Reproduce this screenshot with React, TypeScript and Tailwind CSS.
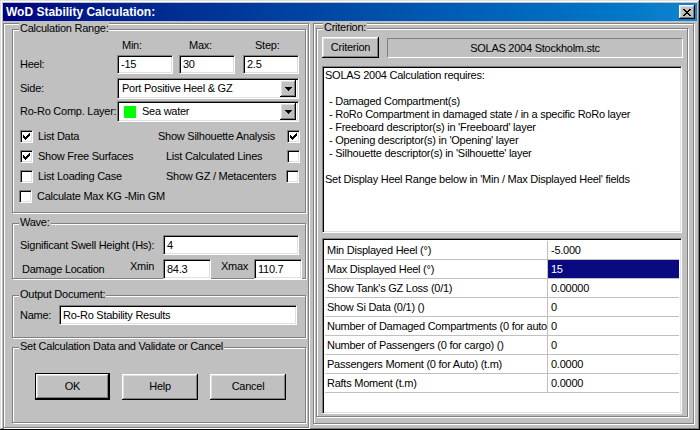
import React from 'react'

// classic win9x bevels
const raised =
  'bg-[#c0c0c0] shadow-[inset_-1px_-1px_#000,inset_1px_1px_#fff,inset_-2px_-2px_#808080,inset_2px_2px_#dfdfdf]'
const sunken =
  'bg-white border border-t-[#808080] border-l-[#808080] border-r-white border-b-white shadow-[inset_1px_1px_#000,inset_-1px_-1px_#dfdfdf]'
const etched = 'border border-[#808080] shadow-[inset_1px_1px_#fff,1px_1px_#fff]'

function Group({ title, className, children }: { title: string; className: string; children: React.ReactNode }) {
  return (
    <div className={`relative shrink-0 ${etched} ${className}`}>
      <span className="absolute left-[6px] top-[-8px] bg-[#c0c0c0] px-[1px] leading-[13px]">{title}</span>
      {children}
    </div>
  )
}

function Field({ value, className }: { value: string; className: string }) {
  return (
    <div className={`${sunken} flex items-center pl-[3px] leading-[13px] overflow-hidden ${className}`}>
      {value}
    </div>
  )
}

function Check({ on }: { on?: boolean }) {
  return (
    <span className={`${sunken} w-[13px] h-[13px] shrink-0 flex items-center justify-center`}>
      {on && (
        <svg width="7" height="7" viewBox="0 0 7 7" shapeRendering="crispEdges">
          <rect x="6" y="0" width="1" height="1" />
          <rect x="5" y="1" width="2" height="1" />
          <rect x="0" y="2" width="1" height="1" />
          <rect x="4" y="2" width="3" height="1" />
          <rect x="0" y="3" width="2" height="1" />
          <rect x="3" y="3" width="3" height="1" />
          <rect x="0" y="4" width="5" height="1" />
          <rect x="1" y="5" width="3" height="1" />
          <rect x="2" y="6" width="1" height="1" />
        </svg>
      )}
    </span>
  )
}

function Combo({ children }: { children: React.ReactNode }) {
  return (
    <div className={`${sunken} w-[182px] h-[21px] flex items-center p-[2px]`}>
      <div className="flex-1 flex items-center gap-[6px] pl-[2px] leading-[13px]">{children}</div>
      <div className={`${raised} w-[16px] h-[17px] flex items-center justify-center`}>
        <svg width="7" height="4" viewBox="0 0 7 4" shapeRendering="crispEdges">
          <rect x="0" y="0" width="7" height="1" />
          <rect x="1" y="1" width="5" height="1" />
          <rect x="2" y="2" width="3" height="1" />
          <rect x="3" y="3" width="1" height="1" />
        </svg>
      </div>
    </div>
  )
}

const params: [string, string][] = [
  ['Min Displayed Heel (°)', '-5.000'],
  ['Max Displayed Heel (°)', '15'],
  ["Show Tank's GZ Loss (0/1)", '0.00000'],
  ['Show Si Data (0/1) ()', '0'],
  ['Number of Damaged Compartments (0 for auto)', '0'],
  ['Number of Passengers (0 for cargo) ()', '0'],
  ['Passengers Moment (0 for Auto) (t.m)', '0.0000'],
  ['Rafts Moment (t.m)', '0.0000'],
]

export default function App() {
  return (
    <div className="w-[700px] h-[430px] overflow-hidden whitespace-nowrap bg-[#c0c0c0] p-[3px] text-[11px] tracking-[-0.25px] text-black font-['Liberation_Sans',Arial,sans-serif] shadow-[inset_-1px_-1px_#000,inset_1px_1px_#dfdfdf,inset_-2px_-2px_#808080,inset_2px_2px_#fff]">
      {/* Title bar */}
      <div className="h-[18px] flex items-center justify-between bg-linear-to-r from-[#000080] to-[#1084d0] pl-[3px] pr-[2px]">
        <span className="text-white font-bold text-[12px] tracking-normal leading-[14px]">WoD Stability Calculation:</span>
        <div className={`${raised} w-[16px] h-[14px] flex items-center justify-center`}>
          <svg width="8" height="7" viewBox="0 0 8 7" shapeRendering="crispEdges">
            <rect x="0" y="0" width="2" height="1" />
            <rect x="6" y="0" width="2" height="1" />
            <rect x="1" y="1" width="2" height="1" />
            <rect x="5" y="1" width="2" height="1" />
            <rect x="2" y="2" width="4" height="1" />
            <rect x="3" y="3" width="2" height="1" />
            <rect x="2" y="4" width="4" height="1" />
            <rect x="1" y="5" width="2" height="1" />
            <rect x="5" y="5" width="2" height="1" />
            <rect x="0" y="6" width="2" height="1" />
            <rect x="6" y="6" width="2" height="1" />
          </svg>
        </div>
      </div>

      <div className="flex mt-[2px]">
        {/* Left pane */}
        <div className={`${etched} w-[306px] h-[405px] flex flex-col pl-[8px]`}>
          <Group title="Calculation Range:" className="mt-[5px] w-[294px] h-[184px]">
            <div className="pl-[7px]">
              <div className="flex mt-[9px] h-[13px] leading-[13px]">
                <span className="w-[97px]" />
                <span className="w-[56px] pl-[5px]">Min:</span>
                <span className="w-[63px] pl-[16px]">Max:</span>
                <span className="w-[65px] pl-[19px]">Step:</span>
              </div>
              <div className="flex items-center mt-[3px] h-[19px]">
                <span className="w-[97px]">Heel:</span>
                <Field value="-15" className="w-[56px] h-[19px]" />
                <Field value="30" className="w-[56px] h-[19px] ml-[6px]" />
                <Field value="2.5" className="w-[56px] h-[19px] ml-[8px]" />
              </div>
              <div className="flex items-center mt-[4px] h-[21px]">
                <span className="w-[97px]">Side:</span>
                <Combo>Port Positive Heel &amp; GZ</Combo>
              </div>
              <div className="flex items-center mt-[2px] h-[21px]">
                <span className="w-[97px]">Ro-Ro Comp. Layer:</span>
                <Combo>
                  <span className="w-[12px] h-[12px] bg-[#00ff00] ml-[2px]" />
                  <span>Sea water</span>
                </Combo>
              </div>
              <div className="flex flex-col mt-[4px]">
                <div className="flex items-center h-[20px]">
                  <Check on />
                  <span className="w-[125px] pl-[5px]">List Data</span>
                  <span className="w-[129px]">Show Silhouette Analysis</span>
                  <Check on />
                </div>
                <div className="flex items-center h-[20px]">
                  <Check on />
                  <span className="w-[125px] pl-[5px]">Show Free Surfaces</span>
                  <span className="w-[129px] pl-[8px]">List Calculated Lines</span>
                  <Check />
                </div>
                <div className="flex items-center h-[20px]">
                  <Check />
                  <span className="w-[125px] pl-[5px]">List Loading Case</span>
                  <span className="w-[128px] pl-[8px]">Show GZ / Metacenters</span>
                  <Check />
                </div>
                <div className="flex items-center h-[20px] -ml-[1px]">
                  <Check />
                  <span className="pl-[5px]">Calculate Max KG -Min GM</span>
                </div>
              </div>
            </div>
          </Group>

          <Group title="Wave:" className="mt-[10px] w-[294px] h-[56px]">
            <div className="pl-[7px]">
              <div className="flex items-center mt-[11px] h-[20px]">
                <span className="w-[143px]">Significant Swell Height (Hs):</span>
                <Field value="4" className="w-[136px] h-[20px]" />
              </div>
              <div className="flex items-center mt-[4px] h-[20px]">
                <span className="w-[110px] pl-[2px]">Damage Location</span>
                <span className="w-[33px] mb-[5px]">Xmin</span>
                <Field value="84.3" className="w-[48px] h-[20px]" />
                <span className="w-[43px] pl-[10px] mb-[5px]">Xmax</span>
                <Field value="110.7" className="w-[48px] h-[20px]" />
              </div>
            </div>
          </Group>

          <Group title="Output Document:" className="mt-[16px] w-[294px] h-[43px]">
            <div className="pl-[7px] flex items-center mt-[9px] h-[20px]">
              <span className="w-[39px]">Name:</span>
              <Field value="Ro-Ro Stability Results" className="w-[238px] h-[20px]" />
            </div>
          </Group>

          <Group title="Set Calculation Data and Validate or Cancel" className="mt-[9px] w-[294px] h-[76px]">
            <div className="flex items-center mt-[25px] pl-[22px] h-[27px]">
              <div className="w-[75px] h-[27px] border border-black">
                <div className={`${raised} w-full h-full flex items-center justify-center`}>OK</div>
              </div>
              <div className={`${raised} ml-[12px] w-[76px] h-[26px] flex items-center justify-center`}>Help</div>
              <div className={`${raised} ml-[12px] w-[76px] h-[26px] flex items-center justify-center`}>Cancel</div>
            </div>
          </Group>
        </div>

        {/* Right pane */}
        <div className={`${etched} ml-[4px] w-[381px] h-[401px] pl-[2px]`}>
          <Group title="Criterion:" className="mt-[4px] w-[372px] h-[389px]">
            <div className="pl-[5px] flex flex-col">
              <div className="flex items-start mt-[8px]">
                <div className={`${raised} w-[57px] h-[21px] flex items-center justify-center`}>Criterion</div>
                <div className="ml-[8px] mt-[1px] w-[296px] h-[20px] border border-t-[#808080] border-l-[#808080] border-r-white border-b-white flex items-center justify-center">
                  SOLAS 2004 Stockholm.stc
                </div>
              </div>
              <div className={`${sunken} mt-[8px] w-[360px] h-[167px] pl-[2px] pt-[2px] leading-[13px] whitespace-pre`}>
                <div>SOLAS 2004 Calculation requires:</div>
                <div>&nbsp;</div>
                <div className="pl-[4px]">- Damaged Compartment(s)</div>
                <div className="pl-[4px]">- RoRo Compartment in damaged state / in a specific RoRo layer</div>
                <div className="pl-[4px]">- Freeboard descriptor(s) in 'Freeboard' layer</div>
                <div className="pl-[4px]">- Opening descriptor(s) in 'Opening' layer</div>
                <div className="pl-[4px]">- Silhouette descriptor(s) in 'Silhouette' layer</div>
                <div>&nbsp;</div>
                <div>Set Display Heel Range below in 'Min / Max Displayed Heel' fields</div>
              </div>
              <div className={`${sunken} mt-[5px] w-[360px] h-[176px] p-[2px]`}>
                {params.map(([name, val], i) => (
                  <div key={name} className="flex h-[19px] border-b border-[#c0c0c0]">
                    <div className="w-[223px] shrink-0 pl-[2px] flex items-center overflow-hidden border-r border-[#c0c0c0]">
                      {name}
                    </div>
                    <div
                      className={`flex-1 pl-[3px] flex items-center ${
                        i === 1 ? 'bg-[#0a0a80] text-white' : ''
                      }`}
                    >
                      {val}
                    </div>
                  </div>
                ))}
              </div>
            </div>
          </Group>
        </div>
      </div>
    </div>
  )
}
